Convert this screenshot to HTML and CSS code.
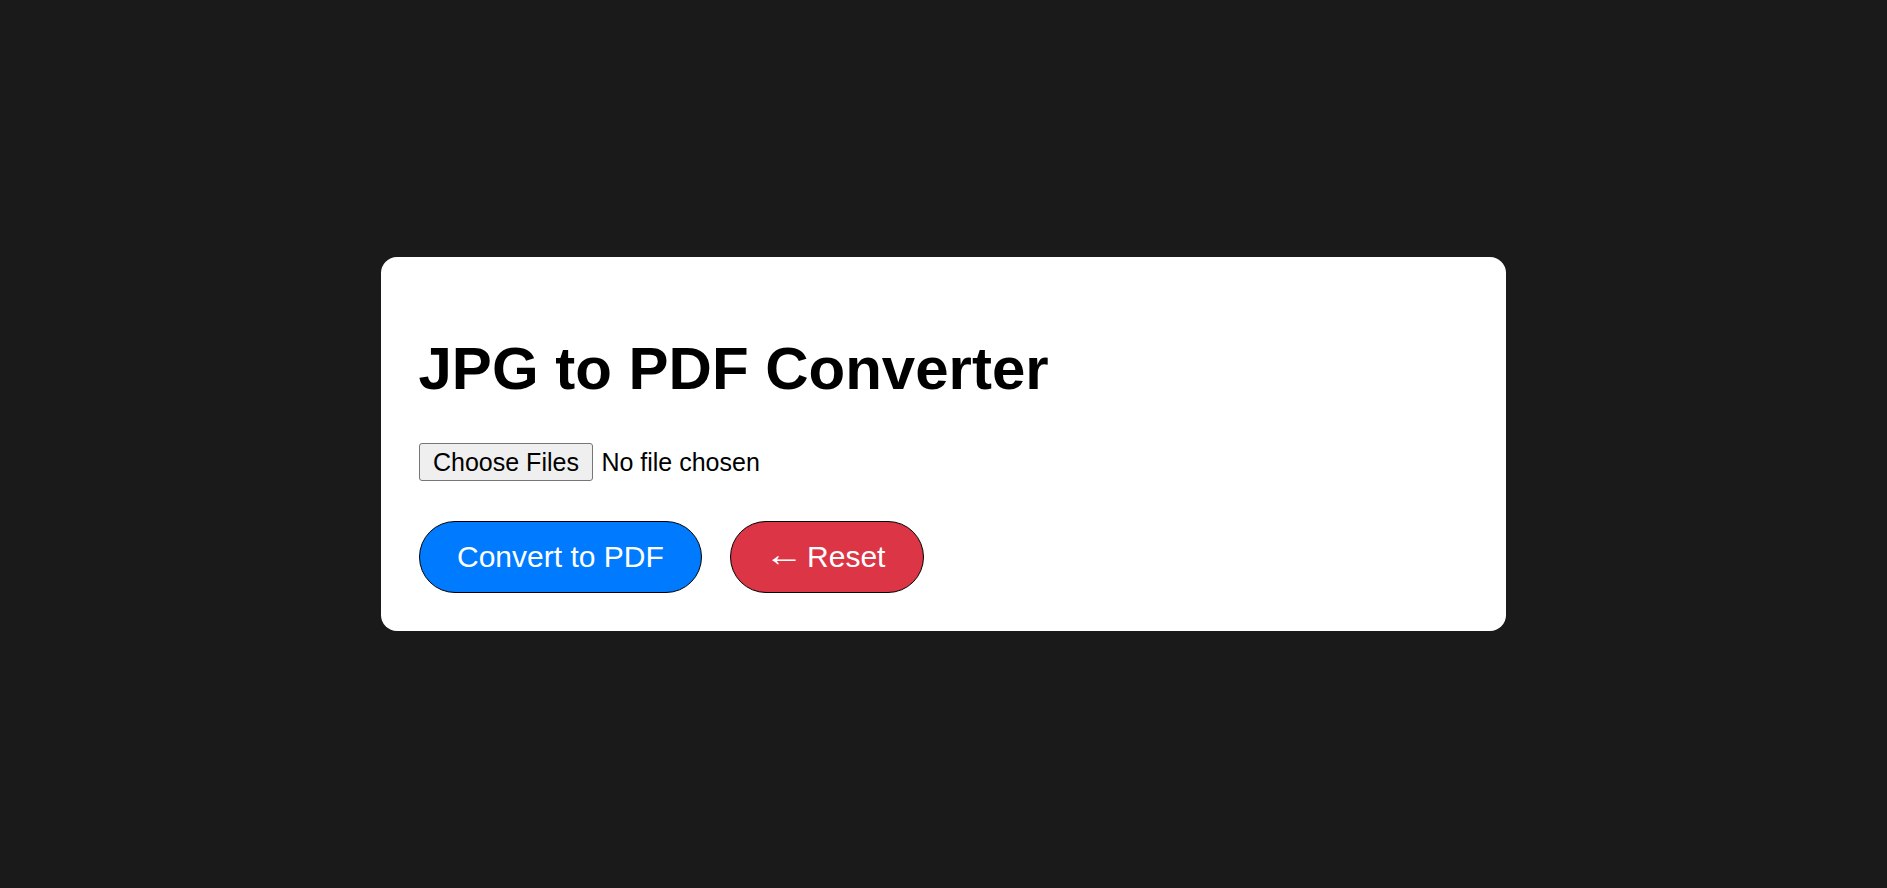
FILE: index.html
```html
<!DOCTYPE html>
<html lang="en">
<head>
<meta charset="utf-8">
<title>JPG to PDF Converter</title>
<link rel="stylesheet" href="styles.css">
</head>
<body>
<main class="card">
  <h1 class="title">JPG to PDF Converter</h1>
  <input class="file-input" type="file" accept="image/jpeg" multiple>
  <div class="actions">
    <button class="btn btn-convert" type="button">Convert to PDF</button>
    <button class="btn btn-reset" type="button"><span class="arrow">←</span> Reset</button>
  </div>
</main>
</body>
</html>
```

FILE: styles.css
```css
html, body {
  margin: 0;
  padding: 0;
}

body {
  background: #1a1a1a;
  font-family: "Liberation Sans", Arial, sans-serif;
  height: 100vh;
  display: flex;
  align-items: center;
  justify-content: center;
}

.card {
  box-sizing: border-box;
  width: 1125px;
  background: #ffffff;
  border-radius: 16px;
  padding: 37.5px 37.5px 38.5px;
  display: flex;
  flex-direction: column;
  align-items: flex-start;
}

.title {
  margin: 40.2px 0;
  font-size: 60px;
  font-weight: 700;
  color: #000;
  line-height: normal;
}

.file-input {
  display: block;
  font-family: "Liberation Sans", Arial, sans-serif;
  font-size: 25px;
  color: #000;
  height: 38px;
  margin: 0 0 39.4px;
  padding: 0;
}

.file-input::file-selector-button {
  font-family: "Liberation Sans", Arial, sans-serif;
  font-size: 25px;
  height: 38px;
  padding: 0 13.5px;
  margin: 0 8px 0 0;
  background: #efefef;
  color: #000;
  border: 1px solid #767676;
  border-radius: 3px;
}

.actions {
  display: flex;
  gap: 28px;
}

.btn {
  font-family: "Liberation Sans", Arial, sans-serif;
  font-size: 30px;
  line-height: normal;
  color: #fff;
  padding: 18px 37.5px;
  border: 1px solid #000;
  border-radius: 50px;
  cursor: pointer;
}

.btn-convert {
  background: #007bff;
}

.btn-reset {
  background: #dc3545;
}

.arrow {
  display: inline-block;
  transform: translateY(-3px) scale(1.3, 1.15);
  transform-origin: center;
}
```
